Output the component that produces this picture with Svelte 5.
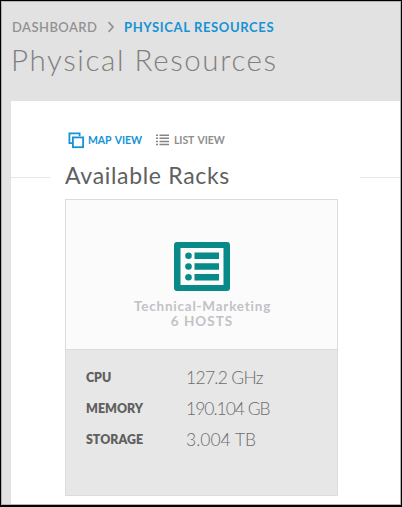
<script>
  const stats = [
    { label: 'CPU', value: '127.2 GHz', cls: 'cpu' },
    { label: 'MEMORY', value: '190.104 GB', cls: 'memory' },
    { label: 'STORAGE', value: '3.004 TB', cls: 'storage' }
  ];
</script>

<main>
  <header>
    <nav>
      <span class="dash">DASHBOARD</span>
      <svg width="8" height="12" viewBox="0 0 8 12"><path d="M1.5 1.2 6 6 1.5 10.8" fill="none" stroke="#929292" stroke-width="1.7" /></svg>
      <span class="current">PHYSICAL RESOURCES</span>
    </nav>
    <h1>Physical Resources</h1>
  </header>
  <section class="panel">
    <div class="tabs">
      <svg class="map" width="17" height="17" viewBox="0 0 17 17" fill="none" stroke="#1593d6" stroke-width="1.8"><path d="M4 11.1H1.4V1.4H11.6V4" /><rect x="4.9" y="5.4" width="10.2" height="9.8" /></svg>
      <span class="mapview">MAP VIEW</span>
      <svg class="list" width="13" height="12" viewBox="0 0 13 12" fill="#858585"><path d="M0 .5h2v1.5H0zM3.5.5H13V2H3.5zM0 3.5h2V5H0zM3.5 3.5H13V5H3.5zM0 6.7h2v1.5H0zM3.5 6.7H13v1.5H3.5zM0 9.8h2v1.5H0zM3.5 9.8H13v1.5H3.5z" /></svg>
      <span class="listview">LIST VIEW</span>
    </div>
    <div class="heading">
      <i class="rule left"></i>
      <h2>Available Racks</h2>
      <i class="rule right"></i>
    </div>
    <article>
      <div class="rack">
        <svg width="56" height="49" viewBox="0 0 56 49"><path fill="#088a88" fill-rule="evenodd" d="M3 0H53Q56 0 56 3V46Q56 49 53 49H3Q0 49 0 46V3Q0 0 3 0ZM6.5 6V43H49.5V6Z" /><path fill="#088a88" d="M20.5 10.5H45V17H20.5ZM20.5 21.3H45V27.8H20.5ZM20.5 32H45V38.5H20.5Z" /><g fill="#088a88"><circle cx="14.5" cy="13.7" r="3.3" /><circle cx="14.5" cy="24.5" r="3.3" /><circle cx="14.5" cy="35.3" r="3.3" /></g></svg>
        <span class="name">Technical-Marketing</span>
        <span class="hosts">6 HOSTS</span>
      </div>
      <dl>
        {#each stats as s}
          <div class="row {s.cls}"><dt>{s.label}</dt><dd>{s.value}</dd></div>
        {/each}
      </dl>
    </article>
  </section>
</main>

<style>
  main {
    position: relative;
    box-sizing: border-box;
    width: 402px;
    height: 507px;
    padding: 1px 0 0 11px;
    background: #e2e2e2;
    font-family: Lato, "Open Sans", sans-serif;
    overflow: hidden;
  }
  main::after {
    content: "";
    position: absolute;
    inset: 0;
    box-shadow: inset 1px 1px #000, inset -1px -2px #000, inset 2px 2px #b4b4b4, inset -2px -3px #b4b4b4;
    pointer-events: none;
  }
  header { height: 100px; }
  nav { display: flex; align-items: center; height: 18px; padding: 17px 0 0 1px; font-size: 13px; line-height: 18px; color: #929292; white-space: nowrap; }
  nav svg { margin: 0 9px 0 9px; flex: none; }
  nav span { flex: none; font-weight: 600; }
  .dash { width: 86px; letter-spacing: .45px; }
  .current { color: #1593d6; font-weight: 700; letter-spacing: .63px; }
  h1 { margin: 6px 0 0 0; font-size: 29.5px; line-height: 36px; font-weight: 300; letter-spacing: 1.6px; color: #808080; white-space: nowrap; width: max-content; }
  .panel { box-sizing: border-box; width: 391px; height: 406px; background: #fff; padding-top: 30px; }
  .tabs { display: flex; align-items: center; height: 18px; padding-left: 57px; font-size: 10.5px; font-weight: 700; white-space: nowrap; }
  .tabs svg { flex: none; }
  .tabs span { flex: none; word-spacing: 1.5px; letter-spacing: -.08px; }
  .mapview { color: #1593d6; width: 68px; margin-left: 3px; }
  .listview { color: #8e8e8e; margin-left: 5px; }
  .heading { display: flex; height: 34px; margin-top: 9px; }
  .rule { height: 1px; background: #e6e6e6; margin-top: 19px; flex: none; }
  .left { width: 39px; margin-right: 15px; }
  .right { width: 42px; margin-left: auto; }
  h2 { margin: -1px 0 0; font-size: 23px; line-height: 36px; font-weight: 400; letter-spacing: .68px; color: #606060; white-space: nowrap; }
  article { box-sizing: border-box; width: 273px; height: 297px; margin: 7px 0 0 54px; border: 1px solid #dcdcdc; background: #e7e7e7; }
  .rack { box-sizing: border-box; height: 150px; padding-top: 42px; background: #fbfbfb; border-bottom: 1px solid #dcdcdc; display: flex; flex-direction: column; align-items: center; font-size: 13.5px; font-weight: 700; line-height: 15px; color: #c2c2c6; }
  .rack svg { flex: none; margin-bottom: 8px; }
  .name { letter-spacing: .78px; padding-left: 2px; }
  .hosts { letter-spacing: 1px; padding-left: 1px; }
  dl { margin: 0; padding: 12px 0 0 20px; }
  .row { display: flex; align-items: center; height: 31px; white-space: nowrap; }
  dt { width: 100px; font-size: 12.4px; font-weight: 800; color: #606060; }
  dd { margin: 0; font-size: 17.5px; font-weight: 300; color: #6c6c6c; }
  .cpu dd { letter-spacing: -.7px; }
  .memory dd { letter-spacing: -1px; }
</style>
